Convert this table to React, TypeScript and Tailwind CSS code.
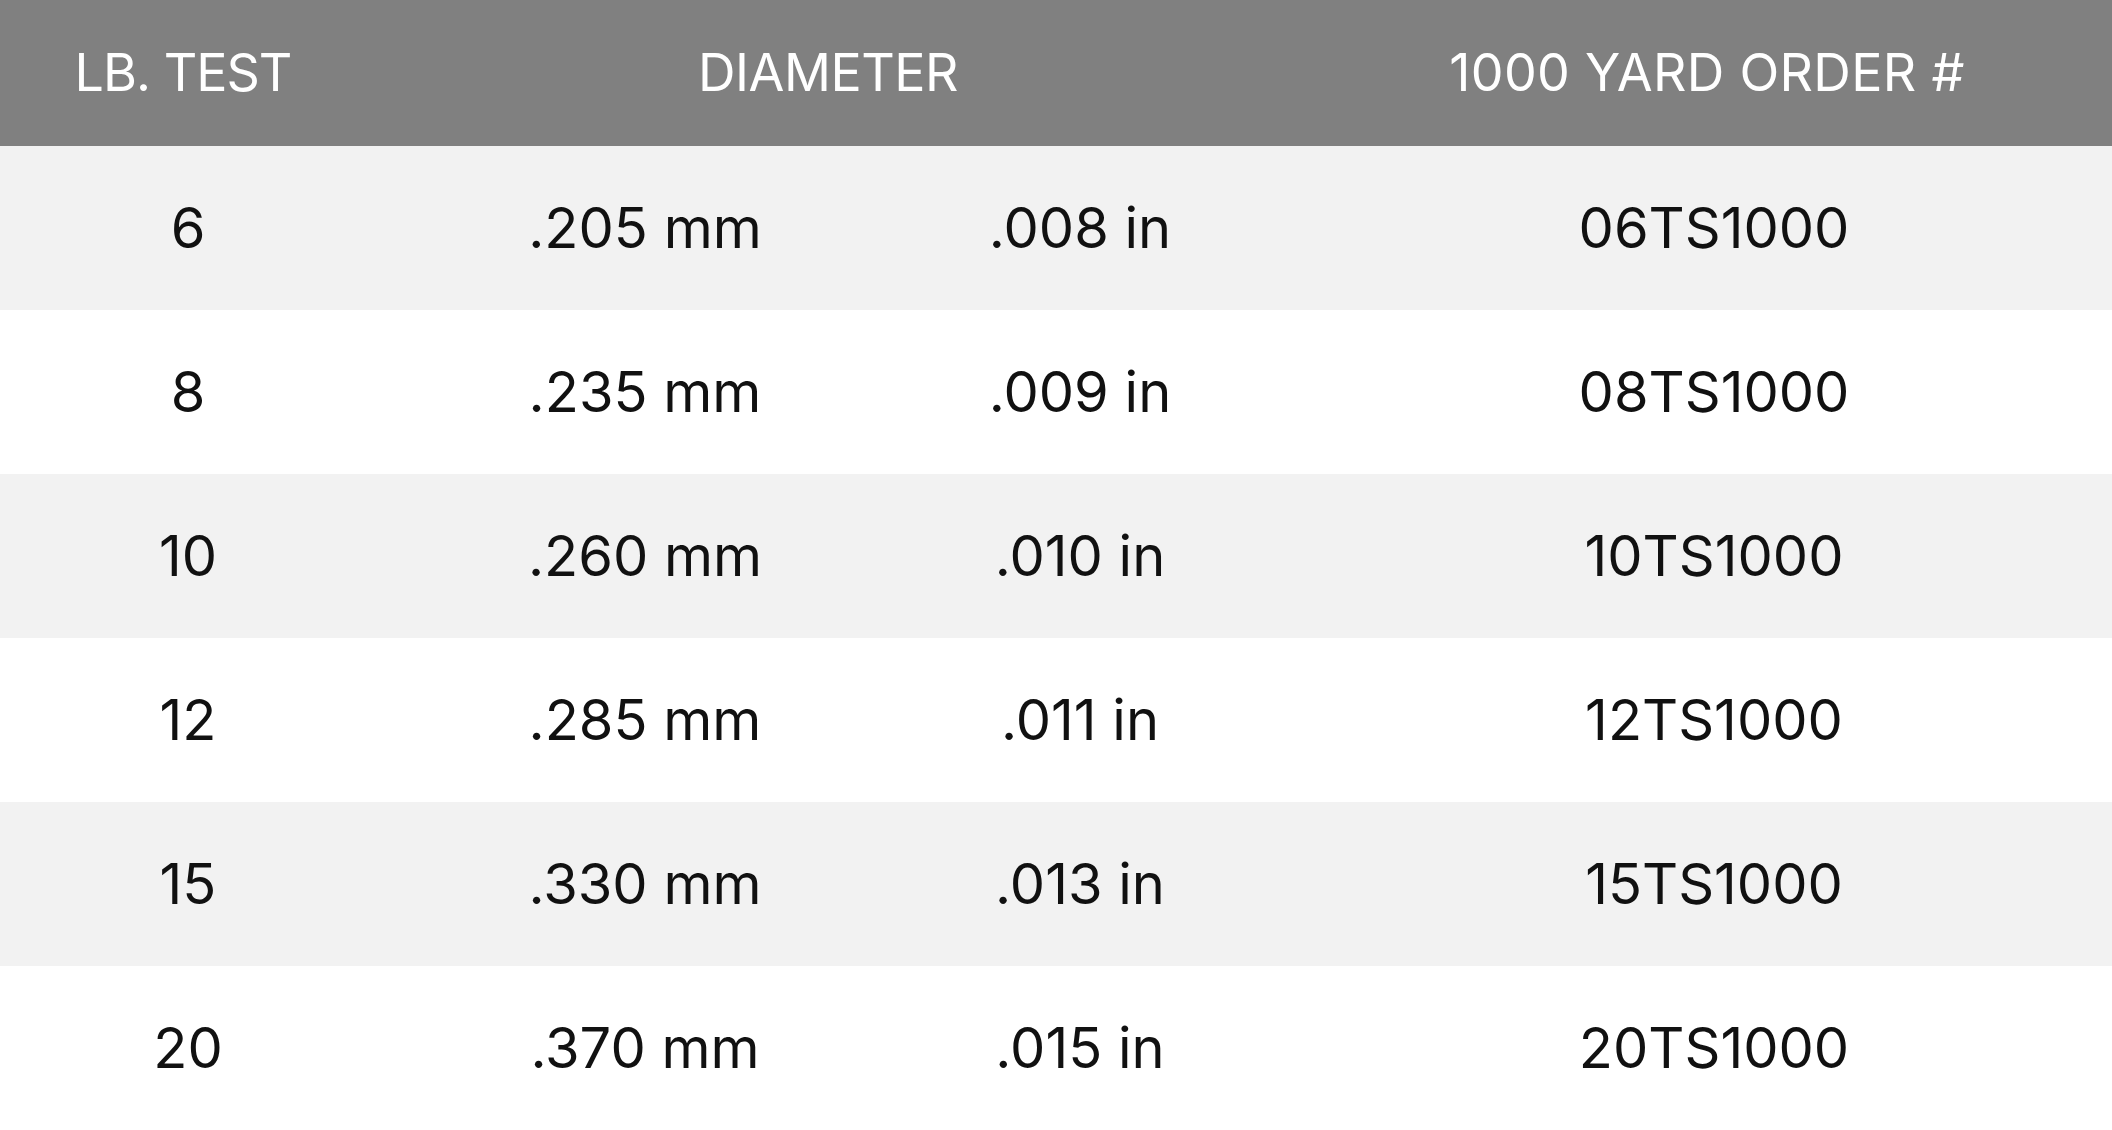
import React from "react";

const rows = [
  ["6", ".205 mm", ".008 in", "06TS1000"],
  ["8", ".235 mm", ".009 in", "08TS1000"],
  ["10", ".260 mm", ".010 in", "10TS1000"],
  ["12", ".285 mm", ".011 in", "12TS1000"],
  ["15", ".330 mm", ".013 in", "15TS1000"],
  ["20", ".370 mm", ".015 in", "20TS1000"],
];

export default function App() {
  return (
    <div
      className="w-[2112px] h-[1130px] overflow-hidden bg-white text-[#111111]"
      style={{ fontFamily: "Inter, 'Noto Sans', sans-serif" }}
    >
      <div className="grid grid-cols-[376px_538px_332px_1fr] h-[146px] items-center bg-[#808080] text-white text-[52px]">
        <div className="text-center pr-[10px] tracking-[-1px]">LB. TEST</div>
        <div className="col-span-2 text-center pl-[34px] tracking-[-0.5px]">DIAMETER</div>
        <div className="text-center pl-[56px] tracking-[0.3px]">1000 YARD ORDER #</div>
      </div>
      {rows.map((r, i) => (
        <div
          key={r[0]}
          className={
            "grid grid-cols-[376px_538px_332px_1fr] h-[164px] items-center text-[56px] " +
            (i % 2 === 0 ? "bg-[#f2f2f2]" : "bg-white")
          }
        >
          <div className="text-center">{r[0]}</div>
          <div className="text-center">{r[1]}</div>
          <div className="text-center">{r[2]}</div>
          <div className="text-center pl-[70px]">{r[3]}</div>
        </div>
      ))}
    </div>
  );
}
